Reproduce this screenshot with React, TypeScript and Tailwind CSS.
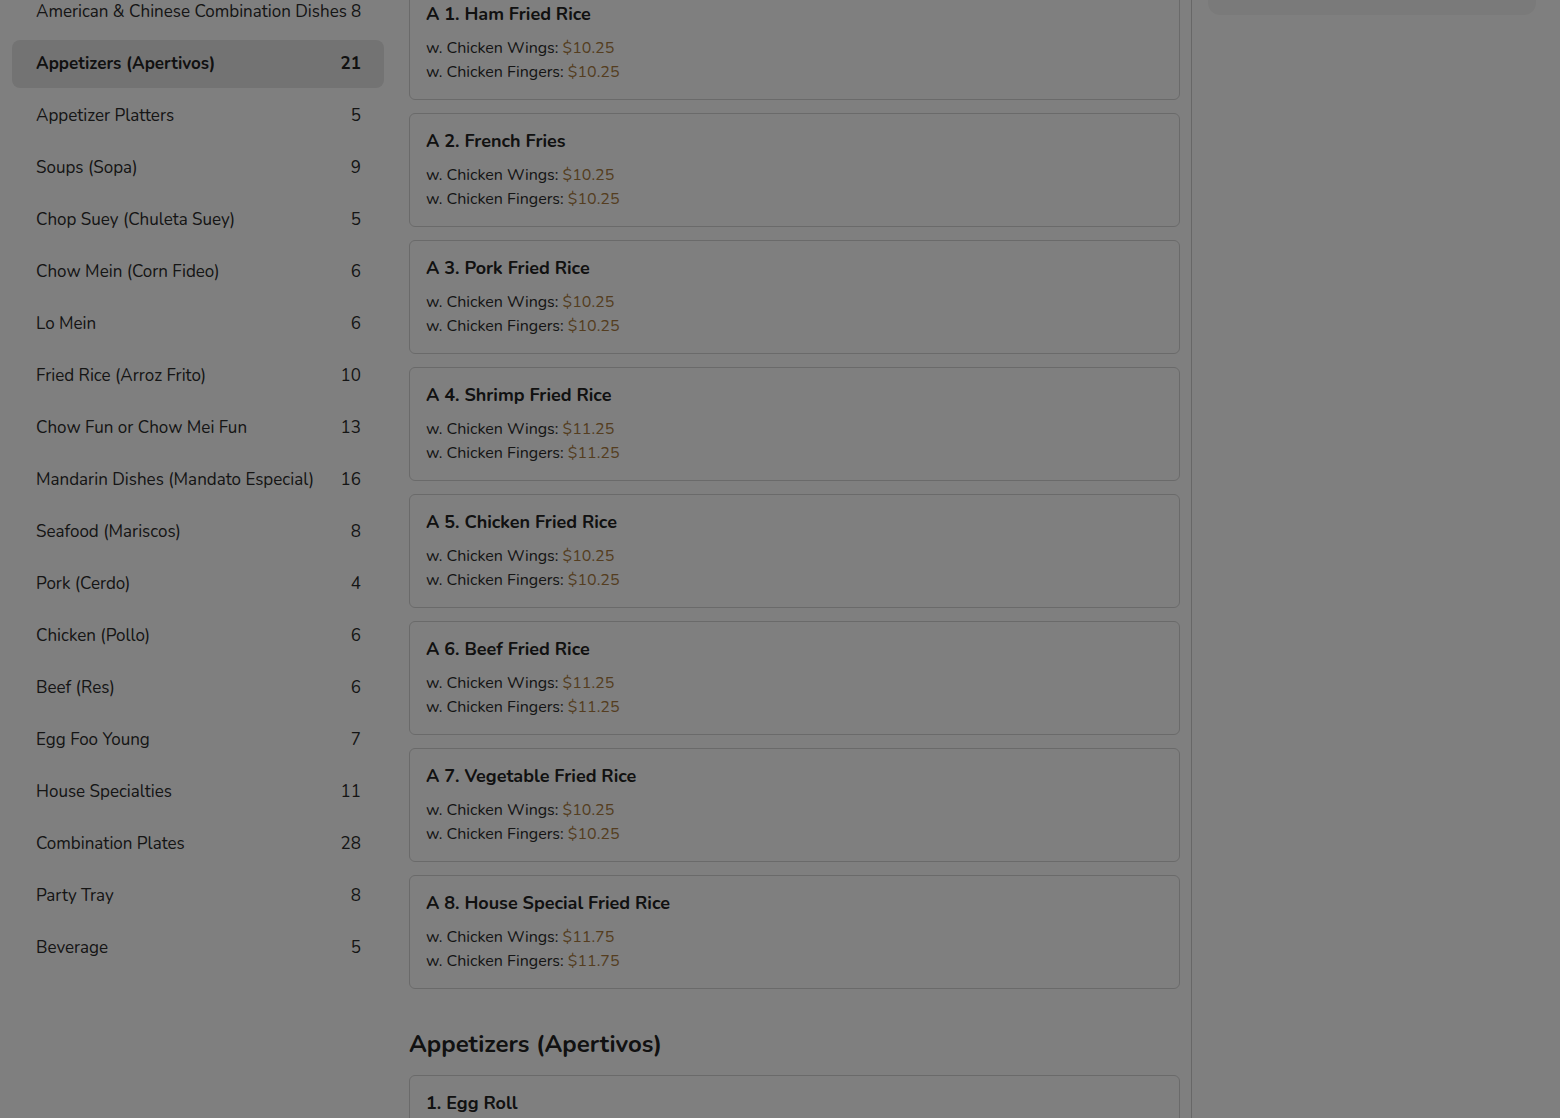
import * as React from "react";

type Category = {
  name: string;
  count: number;
};

type Dish = {
  title: string;
  wings: string;
  fingers: string;
};

const categories: Category[] = [
  { name: "American & Chinese Combination Dishes", count: 8 },
  { name: "Appetizers (Apertivos)", count: 21 },
  { name: "Appetizer Platters", count: 5 },
  { name: "Soups (Sopa)", count: 9 },
  { name: "Chop Suey (Chuleta Suey)", count: 5 },
  { name: "Chow Mein (Corn Fideo)", count: 6 },
  { name: "Lo Mein", count: 6 },
  { name: "Fried Rice (Arroz Frito)", count: 10 },
  { name: "Chow Fun or Chow Mei Fun", count: 13 },
  { name: "Mandarin Dishes (Mandato Especial)", count: 16 },
  { name: "Seafood (Mariscos)", count: 8 },
  { name: "Pork (Cerdo)", count: 4 },
  { name: "Chicken (Pollo)", count: 6 },
  { name: "Beef (Res)", count: 6 },
  { name: "Egg Foo Young", count: 7 },
  { name: "House Specialties", count: 11 },
  { name: "Combination Plates", count: 28 },
  { name: "Party Tray", count: 8 },
  { name: "Beverage", count: 5 },
];

const dishes: Dish[] = [
  { title: "A 1. Ham Fried Rice", wings: "$10.25", fingers: "$10.25" },
  { title: "A 2. French Fries", wings: "$10.25", fingers: "$10.25" },
  { title: "A 3. Pork Fried Rice", wings: "$10.25", fingers: "$10.25" },
  { title: "A 4. Shrimp Fried Rice", wings: "$11.25", fingers: "$11.25" },
  { title: "A 5. Chicken Fried Rice", wings: "$10.25", fingers: "$10.25" },
  { title: "A 6. Beef Fried Rice", wings: "$11.25", fingers: "$11.25" },
  { title: "A 7. Vegetable Fried Rice", wings: "$10.25", fingers: "$10.25" },
  { title: "A 8. House Special Fried Rice", wings: "$11.75", fingers: "$11.75" },
];

const active = "Appetizers (Apertivos)";

const DishCard = ({ dish }: { dish: Dish }) => (
  <div className="rounded-md border border-[#d4d4d4] bg-white px-4 pt-[15px] pb-[15px]">
    <div className="mb-[10px] text-lg font-bold leading-6 text-[#222]">{dish.title}</div>
    <div className="text-base leading-6 text-[#2a2a2a]">
      w. Chicken Wings: <span className="text-[#a87a40]">{dish.wings}</span>
    </div>
    <div className="text-base leading-6 text-[#2a2a2a]">
      w. Chicken Fingers: <span className="text-[#a87a40]">{dish.fingers}</span>
    </div>
  </div>
);

const App = () => {
  return (
    <div
      className="relative flex h-[1118px] w-full overflow-hidden bg-white"
      style={{ fontFamily: "Nunito, Lato, 'Open Sans', sans-serif" }}
    >
      <aside className="w-[396px] shrink-0 px-3">
        <ul className="mt-[-12px] flex flex-col gap-1">
          {categories.map((c) => {
            const isActive = c.name === active;
            return (
              <li
                key={c.name}
                className={
                  isActive
                    ? "flex h-12 items-center justify-between gap-1 rounded-lg bg-[#e7e7e7] pl-6 pr-[23px] text-[17px] font-bold text-[#222]"
                    : "flex h-12 items-center justify-between gap-1 rounded-lg pl-6 pr-[23px] text-[17px] text-[#2a2a2a]"
                }
              >
                <span className="whitespace-nowrap">{c.name}</span>
                <span>{c.count}</span>
              </li>
            );
          })}
        </ul>
      </aside>

      <main className="w-[796px] shrink-0 border-r border-[#cfcfcf] pl-[13px] pr-[11px]">
        <div className="mt-[-14px] flex flex-col gap-[13px]">
          {dishes.map((d) => (
            <DishCard key={d.title} dish={d} />
          ))}
        </div>
        <h2 className="mt-[39px] mb-[15px] text-2xl font-bold leading-8 text-[#222]">
          Appetizers (Apertivos)
        </h2>
        <div className="min-h-[114px] rounded-md border border-[#d4d4d4] bg-white px-4 pt-[15px] pb-[15px]">
          <div className="text-lg font-bold leading-6 text-[#222]">1. Egg Roll</div>
        </div>
      </main>

      <section className="flex-1 pl-4 pr-6">
        <div className="mt-[-185px] h-[200px] rounded-xl bg-stone-100" />
      </section>

      <div className="fixed inset-0 bg-black/50" />
    </div>
  );
};

export default App;
